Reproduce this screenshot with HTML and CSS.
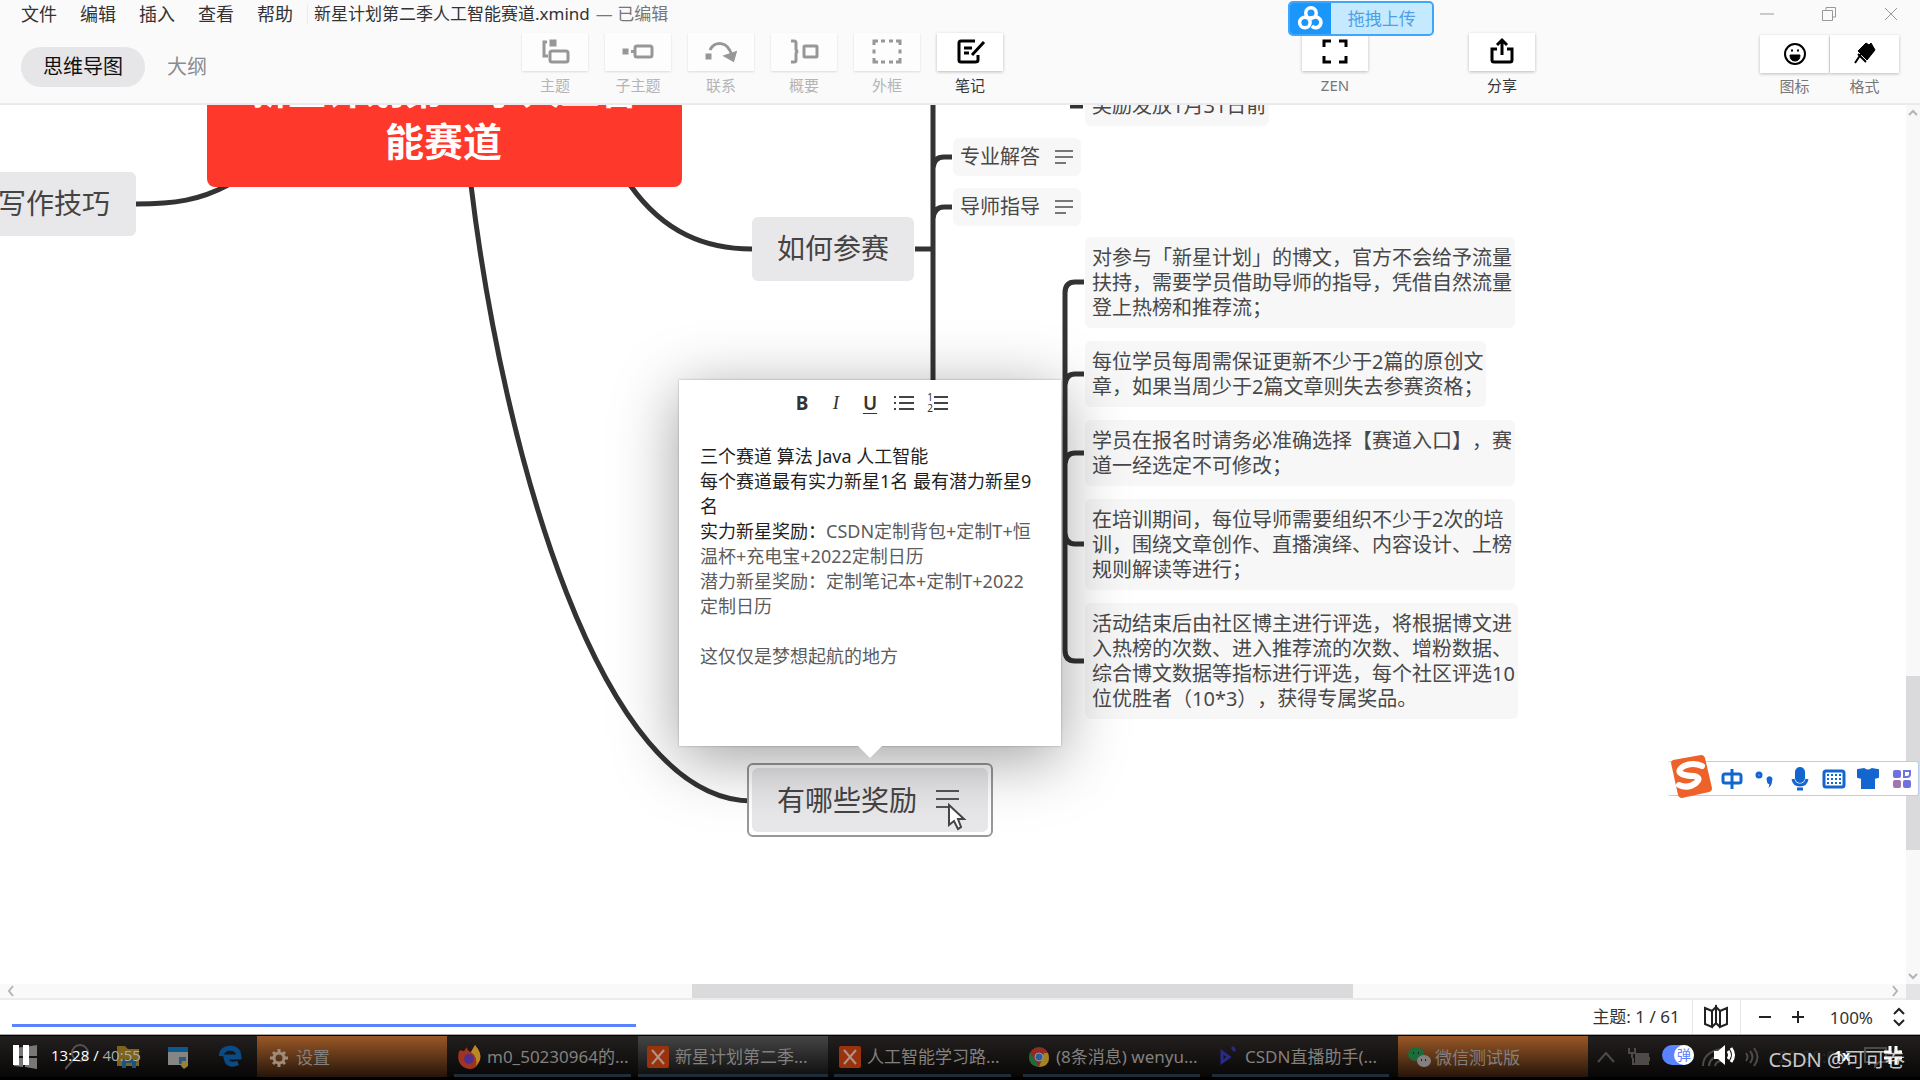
FILE: index.html
```html
<!DOCTYPE html>
<html lang="zh-CN">
<head>
<meta charset="utf-8">
<meta name="viewport" content="width=device-width, initial-scale=1">
<title>新星计划第二季人工智能赛道.xmind</title>
<link rel="stylesheet" href="styles.css">
</head>
<body>
<div class="app">
  <header class="header">
    <div class="menubar">
      <nav class="menus">
        <button class="menu">文件</button>
        <button class="menu">编辑</button>
        <button class="menu">插入</button>
        <button class="menu">查看</button>
        <button class="menu">帮助</button>
      </nav>
      <div class="doc-title">新星计划第二季人工智能赛道.xmind<span class="doc-state">— 已编辑</span></div>
      <div class="window-controls">
        <button class="win-btn" aria-label="最小化"><svg width="16" height="16" viewBox="0 0 16 16"><path d="M1 8h14"/></svg></button>
        <button class="win-btn" aria-label="还原"><svg width="16" height="16" viewBox="0 0 16 16"><path d="M1.500 4.500h10v10h-10zM5 4V1.500h9.500V11H12"/></svg></button>
        <button class="win-btn" aria-label="关闭"><svg width="16" height="16" viewBox="0 0 16 16"><path d="M2 2l12 12M14 2L2 14"/></svg></button>
      </div>
    </div>
    <div class="toolbar">
      <div class="views">
        <button class="view view-active">思维导图</button>
        <button class="view">大纲</button>
      </div>
      <div class="tools">
        <button class="tool" disabled><span class="tool-box"><svg width="32" height="32" viewBox="0 0 32 32"><path d="M8 6H5v14h4"/><rect x="11" y="15" width="18" height="11" rx="2"/><rect class="solid" x="12" y="5" width="4" height="4"/></svg></span>主题</button>
        <button class="tool" disabled><span class="tool-box"><svg width="32" height="32" viewBox="0 0 32 32"><rect class="solid" x="2" y="14" width="3" height="3"/><path d="M9 15.500h4"/><rect x="13" y="10" width="17" height="11" rx="2"/></svg></span>子主题</button>
        <button class="tool" disabled><span class="tool-box"><svg width="32" height="32" viewBox="0 0 32 32"><rect class="solid" x="2" y="19" width="3" height="3"/><path d="M5 14c4-9 18-10 22 6"/><path class="solid" d="M30 17l-2 7-7-4z"/></svg></span>联系</button>
        <button class="tool" disabled><span class="tool-box"><svg width="32" height="32" viewBox="0 0 32 32"><path d="M3 5h3q2 0 2 2v6q0 2 2 2.500q-2 .5-2 2.500v6q0 2-2 2H3"/><rect x="16" y="10" width="13" height="11" rx="1"/></svg></span>概要</button>
        <button class="tool" disabled><span class="tool-box"><svg width="32" height="32" viewBox="0 0 32 32"><path d="M3 9V5h4M25 5h4v4M29 22v4h-4M7 26H3v-4M10 5h4M18 5h4M10 26h4M18 26h4M3 13.500v4M29 13.500v4"/></svg></span>外框</button>
        <button class="tool tool-on"><span class="tool-box"><svg width="32" height="32" viewBox="0 0 32 32"><path d="M21 5H7q-2 0-2 2v17q0 2 2 2h14q3 0 3-2v-5M10 12h8M10 17h5M30 6L18 19"/></svg></span>笔记</button>
      </div>
      <div class="tools tools-share">
        <button class="tool tool-on"><span class="tool-box"><svg width="32" height="32" viewBox="0 0 32 32"><path d="M5 11V5h7M20 5h7v6M27 20v6h-7M12 26H5v-6"/></svg></span><span class="dim">ZEN</span></button>
        <button class="tool tool-on"><span class="tool-box"><svg width="32" height="32" viewBox="0 0 32 32"><path d="M11 13H6v11q0 2 2 2h16q2 0 2-2V13h-5M16 19V5M11 9l5-5 5 5"/></svg></span>分享</button>
      </div>
      <div class="tools tools-side">
        <button class="tool tool-on"><span class="tool-box"><svg width="32" height="32" viewBox="0 0 32 32"><circle cx="16" cy="16" r="10"/><path class="solid" d="M11 17h10q0 6-5 6t-5-6z"/><path d="M12 12.500h2M18 12.500h2"/></svg></span><span class="dim">图标</span></button>
        <button class="tool tool-on"><span class="tool-box"><svg width="32" height="32" viewBox="0 0 32 32"><path class="solid" d="M17 5l3 2 2-2 4 7-8 10-9-9z"/><path d="M12 16l-6 9M9 16l8 8"/></svg></span><span class="dim">格式</span></button>
      </div>
    </div>
    <button class="upload"><span class="upload-logo"><svg width="28" height="28" viewBox="0 0 32 32"><circle cx="16" cy="9" r="6"/><circle cx="9" cy="20" r="6"/><path d="M14 17q2-3 6-3a6 6 0 1 1-3 10"/></svg></span><span class="upload-text">拖拽上传</span></button>
  </header>

  <main class="workspace">
    <div class="canvas">
      <svg class="links" width="1906" height="880" viewBox="0 104 1906 880">
        <path d="M136 203C175 203 200 199 228 184"/>
        <path d="M471 184C503 450 600 800 752 800"/>
        <path d="M630 184C664 232 706 248 752 248"/>
        <path d="M915 248H933M933 104V420M933 167Q934 156 944 156H952M933 218Q934 206 944 206H952"/>
        <path d="M1070 105H1083"/>
        <path d="M1084 281H1075Q1065 281 1065 292V649Q1065 660 1075 660H1084M1065 384Q1066 373 1075 373H1084M1065 463Q1066 452 1075 452H1084M1065 532Q1066 543 1075 543H1084"/>
      </svg>

      <div class="node node-root">新星计划第二季人工智<br>能赛道</div>
      <div class="node node-main node-writing">写作技巧</div>
      <div class="node node-main node-join">如何参赛</div>
      <div class="node node-leaf node-award">奖励发放1月31日前</div>
      <div class="leaves leaves-help">
        <div class="node-leaf node-note">专业解答 <svg width="20" height="20" viewBox="0 0 20 20"><path d="M1 4h18M1 10h18M1 16h11"/></svg></div>
        <div class="node-leaf node-note">导师指导 <svg width="20" height="20" viewBox="0 0 20 20"><path d="M1 4h18M1 10h18M1 16h11"/></svg></div>
      </div>
      <div class="leaves leaves-rules">
        <div class="node-leaf">对参与「新星计划」的博文，官方不会给予流量<br>扶持，需要学员借助导师的指导，凭借自然流量<br>登上热榜和推荐流；</div>
        <div class="node-leaf">每位学员每周需保证更新不少于2篇的原创文<br>章，如果当周少于2篇文章则失去参赛资格；</div>
        <div class="node-leaf">学员在报名时请务必准确选择【赛道入口】，赛<br>道一经选定不可修改；</div>
        <div class="node-leaf">在培训期间，每位导师需要组织不少于2次的培<br>训，围绕文章创作、直播演绎、内容设计、上榜<br>规则解读等进行；</div>
        <div class="node-leaf">活动结束后由社区博主进行评选，将根据博文进<br>入热榜的次数、进入推荐流的次数、增粉数据、<br>综合博文数据等指标进行评选，每个社区评选10<br>位优胜者（10*3），获得专属奖品。</div>
      </div>
      <div class="node node-selected"><div class="node-main node-prize">有哪些奖励 <svg width="26" height="26" viewBox="0 0 26 26"><path d="M1 4h23M1 12h23M1 20h14"/></svg></div></div>

      <section class="note">
        <div class="note-tools">
          <button class="fmt" aria-label="粗体"><b>B</b></button>
          <button class="fmt fmt-italic" aria-label="斜体"><i>I</i></button>
          <button class="fmt" aria-label="下划线"><u>U</u></button>
          <button class="fmt" aria-label="项目列表"><svg width="22" height="20" viewBox="0 0 22 20"><path d="M6 4h15M6 10h15M6 16h15M1 4h2M1 10h2M1 16h2"/></svg></button>
          <button class="fmt" aria-label="编号列表"><span class="digits"><span>1</span><span>2</span></span><svg width="16" height="20" viewBox="0 0 16 20"><path d="M1 4h14M1 10h14M1 16h14"/></svg></button>
        </div>
        <div class="note-text" contenteditable="true" spellcheck="false" role="textbox" aria-label="笔记">三个赛道 算法 Java 人工智能<br>每个赛道最有实力新星1名 最有潜力新星9<br>名<br>实力新星奖励：<span class="soft">CSDN定制背包+定制T+恒<br>温杯+充电宝+2022定制日历<br>潜力新星奖励：定制笔记本+定制T+2022<br>定制日历<br><br>这仅仅是梦想起航的地方</span></div>
      </section>

      <svg class="cursor" width="20" height="28" viewBox="0 0 20 28"><path d="M2 2v20l5-4 4 8 3-2-3-8h6z"/></svg>
    </div>
    <div class="vbar">
      <svg width="10" height="8" viewBox="0 0 10 8"><path d="M1 6l4-4 4 4"/></svg>
      <div class="vthumb"></div>
      <svg width="10" height="8" viewBox="0 0 10 8"><path d="M1 2l4 4 4-4"/></svg>
    </div>
    <div class="hbar">
      <svg width="8" height="12" viewBox="0 0 8 12"><path d="M6 1L2 6l4 5"/></svg>
      <div class="hthumb"></div>
      <svg width="8" height="12" viewBox="0 0 8 12"><path d="M2 1l4 5-4 5"/></svg>
    </div>
    <div class="corner"></div>

    <div class="ime">
      <svg class="ime-logo" width="46" height="46" viewBox="0 0 46 46"><path class="ime-red" d="M3 9q0-2 2-3L33 1q3 0 4 3l7 30q0 3-3 4l-27 6q-3 0-4-3z"/><path class="ime-s" d="M34 12q-9-4-18 0-8 5-2 8 4 2 12 2 8 2 2 7-8 6-17 2"/></svg>
      <button class="ime-btn" aria-label="中文"><svg width="24" height="24" viewBox="0 0 24 24"><rect x="3" y="7" width="18" height="9" rx="2"/><path d="M12 2v20"/></svg></button>
      <button class="ime-btn" aria-label="标点"><svg width="24" height="24" viewBox="0 0 24 24"><circle cx="5" cy="8" r="2"/><path class="comma" d="M13 14a3 3 0 1 1 5 0q0 5-4 7 2-3 1-4-2 0-2-3z"/></svg></button>
      <button class="ime-btn" aria-label="语音"><svg width="24" height="24" viewBox="0 0 24 24"><rect class="fill" x="8" y="1" width="8" height="14" rx="4"/><path d="M5 12q1 6 7 6t7-6M9 22h6"/></svg></button>
      <button class="ime-btn" aria-label="键盘"><svg width="24" height="24" viewBox="0 0 24 24"><rect x="2" y="4" width="20" height="16" rx="2"/><path class="keys" d="M5 8h14M5 12h14M5 16h2M9 16h6M17 16h2"/></svg></button>
      <button class="ime-btn" aria-label="皮肤"><svg width="24" height="24" viewBox="0 0 24 24"><path class="fill" d="M2 3l6-1q4 3 8 0l6 1v7l-4 1v10H6V11L2 10z"/></svg></button>
      <button class="ime-btn ime-more" aria-label="工具箱"><svg width="24" height="24" viewBox="0 0 24 24"><rect class="q1" x="3" y="3" width="8" height="8" rx="2"/><path class="q2" d="M14 10V4h6v3q0 3-3 3z"/><rect class="q3" x="3" y="13" width="8" height="8" rx="2"/><rect class="q1" x="13" y="13" width="8" height="8" rx="2"/></svg></button>
    </div>
  </main>

  <footer class="status">
    <span class="status-count">主题: 1 / 61</span>
    <button class="status-map" aria-label="导航图"><svg width="26" height="26" viewBox="0 0 26 26"><path d="M2 4l7 3v16l-7-3zM9 7l4-4v16l-4 4M17 7l-4-4v16l4 4M24 4l-7 3v16l7-3z"/></svg></button>
    <div class="zoom">
      <button class="zoom-btn" aria-label="缩小"><svg width="14" height="14" viewBox="0 0 14 14"><path d="M1 7h12"/></svg></button>
      <button class="zoom-btn" aria-label="放大"><svg width="14" height="14" viewBox="0 0 14 14"><path d="M1 7h12M7 1v12"/></svg></button>
      <span class="zoom-value">100%</span>
      <button class="zoom-btn" aria-label="缩放比例"><svg width="14" height="20" viewBox="0 0 14 20"><path d="M2 7l5-5 5 5M2 13l5 5 5-5"/></svg></button>
    </div>
    <div class="progress"></div>
  </footer>

  <div class="taskbar">
    <div class="pinned">
      <svg width="24" height="26" viewBox="0 0 24 26"><path fill="#777" d="M0 4l9-1v9H0zM11 3l12-2v11H11zM0 14h9v9l-9-1zM11 14h12v11l-12-2z"/></svg>
      <svg width="24" height="26" viewBox="0 0 24 26"><g fill="none" stroke="#575352" stroke-width="2"><circle cx="15" cy="9" r="8"/><path d="M9 15L0 25"/></g></svg>
      <svg width="24" height="26" viewBox="0 0 24 26"><path fill="#7d631c" d="M1 2h8l3 3h11v17H1z"/><path fill="#1c5480" d="M6 24v-9h14v9h-4v-5h-6v5z"/></svg>
      <svg width="24" height="26" viewBox="0 0 24 26"><path fill="#858585" d="M1 3h20v18H1z"/><path fill="#0d5a92" d="M1 3h20v5H1z"/><path fill="#30597a" d="M12 13h7v7h-7z"/><path fill="#94823a" d="M15 17h6v5l-4 3-3-3z"/></svg>
      <svg width="24" height="26" viewBox="0 0 24 26"><path fill="none" stroke="#0a4b85" stroke-width="5" d="M3 12q1-8 10-8 8 1 8 9H8q1 10 12 6"/></svg>
    </div>
    <button class="task task-alert"><svg width="20" height="22" viewBox="0 0 20 22"><g fill="none" stroke="#a08c7a" stroke-width="3"><circle cx="10" cy="11" r="5"/><path d="M10 2v3M10 17v3M1 11h3M16 11h3M4 5l2 2M14 15l2 2M16 5l-2 2M6 15l-2 2"/></g></svg><span>设置</span></button>
    <button class="task"><svg width="24" height="26" viewBox="0 0 24 26"><path fill="#a03420" d="M2 6q2 1 4 1l3-4q0 4 4 5l4-7q7 8 5 15-3 9-10 9T1 18Q-1 10 2 6z"/><path fill="#b78a25" d="M13 8l4-7q7 8 5 15l-4 6q2-9-5-14z"/><circle fill="#50308c" cx="11" cy="15" r="5"/></svg><span>m0_50230964的...</span></button>
    <button class="task task-current"><svg width="24" height="26" viewBox="0 0 24 26"><rect fill="#9a330d" x="1" y="2" width="22" height="22" rx="2"/><path stroke="#b09488" stroke-width="2" d="M6 6l12 14M18 6L6 20"/></svg><span>新星计划第二季...</span></button>
    <button class="task"><svg width="24" height="26" viewBox="0 0 24 26"><rect fill="#9a330d" x="1" y="2" width="22" height="22" rx="2"/><path stroke="#b09488" stroke-width="2" d="M6 6l12 14M18 6L6 20"/></svg><span>人工智能学习路...</span></button>
    <button class="task"><svg width="24" height="26" viewBox="0 0 24 26"><circle fill="#8f2d22" cx="12" cy="13" r="10"/><path fill="#1f6b36" d="M3 8l9 15Q2 22 2 13z"/><path fill="#a38420" d="M12 23l5-14h4q4 13-9 14z"/><circle fill="#2c5c9c" cx="12" cy="13" r="4" stroke="#999" stroke-width="1"/></svg><span>(8条消息) wenyu...</span></button>
    <button class="task"><svg width="24" height="26" viewBox="0 0 24 26"><path fill="none" stroke="#2a2a86" stroke-width="3" d="M6 8v10l7-5zM16 3l3 4"/></svg><span>CSDN直播助手(...</span></button>
    <button class="task task-alert task-wechat"><svg width="24" height="26" viewBox="0 0 24 26"><ellipse fill="#1d6b38" cx="9" cy="9" rx="8" ry="7"/><ellipse fill="#858080" cx="17" cy="16" rx="7" ry="6"/><path stroke="#222" stroke-width="2" d="M6 8h1M11 8h1M14 15h1M18 15h1"/></svg><span>微信测试版</span></button>
    <div class="tray">
      <svg width="18" height="12" viewBox="0 0 18 12"><path d="M1 11l8-9 8 9"/></svg>
      <svg width="24" height="20" viewBox="0 0 24 20"><path d="M8 7h13v10H6v-6M2 1v5h6V1M5 6v5M22 10v4"/><path class="cell" d="M9 9h10v6H9z"/></svg>
      <svg class="tray-net" width="24" height="22" viewBox="0 0 24 22"><path d="M2 20Q2 6 21 3M8 20q0-9 13-11M14 20q1-5 7-5"/></svg>
      <svg width="24" height="20" viewBox="0 0 24 20"><path d="M9 6q3 4 0 8M13 4q5 6 0 12M17 1q7 9 0 18"/></svg>
      <span class="clock">20:20:01</span>
      <svg class="tray-msg" width="24" height="22" viewBox="0 0 24 22"><path d="M1 2h21v14h-7l-4 4v-4H1z"/></svg>
    </div>

    <div class="player">
      <button class="pause" aria-label="暂停"><svg width="18" height="20" viewBox="0 0 18 20"><path d="M1 0h6v20H1zM11 0h6v20h-6z"/></svg></button>
      <div class="time">13:28 / <span class="total">40:55</span></div>
      <button class="danmu" aria-label="弹幕"><span class="danmu-dot">弹</span></button>
      <button class="volume" aria-label="音量"><svg width="24" height="22" viewBox="0 0 24 22"><path class="horn" d="M1 7h4l7-6v20l-7-6H1z"/><path d="M15 7q3 4 0 8M18 4q5 7 0 14"/></svg></button>
      <button class="speed">1x</button>
      <button class="shrink" aria-label="退出全屏"><svg width="20" height="20" viewBox="0 0 20 20"><path d="M7 1v6H1M13 1v6h6M7 19v-6H1M13 19v-6h6"/></svg></button>
    </div>
    <div class="watermark">CSDN @可可卷</div>
  </div>
</div>
</body>
</html>
```
FILE: styles.css
```css
* { box-sizing: border-box; }

body {
  margin: 0;
  background: #fff;
  color: #333;
  font-family: "Noto Sans", "Noto Sans CJK SC", sans-serif;
  text-spacing-trim: space-all;
  overflow: hidden;
}

button {
  margin: 0;
  padding: 0;
  border: 0;
  background: none;
  color: inherit;
  font: inherit;
}

svg { display: block; flex: none; }

.app { display: flex; flex-direction: column; min-height: 100vh; }

/* Header */
.header {
  position: relative;
  background: #fafafb;
  border-bottom: 2px solid #ebe9ec;
}
.menubar { display: flex; align-items: center; height: 28px; padding: 0 21px; }
.menus {
  display: flex;
  gap: 23px;
  padding-right: 14px;
  margin-right: 6px;
  border-right: 1px solid #ececee;
  font-size: 18px;
  line-height: 20px;
}
.doc-title { flex: 1; font-size: 17px; line-height: 20px; white-space: nowrap; }
.doc-state { margin-left: 6px; color: #777; }
.window-controls { display: flex; gap: 46px; }
.win-btn svg { fill: none; stroke: #999; stroke-width: 1; }

.toolbar { display: flex; align-items: flex-start; height: 75px; padding: 5px 21px 0; }
.views { display: flex; align-items: center; width: 501px; padding-top: 14px; font-size: 20px; line-height: 24px; }
.view { color: #8b8b8f; padding: 0 22px; }
.view-active { height: 40px; border-radius: 20px; background: #e6e5e8; color: #111; }
.tools { display: flex; gap: 17px; }
.tool {
  display: flex;
  flex-direction: column;
  align-items: center;
  gap: 4px;
  width: 66px;
  color: #b4b4b6;
  font-size: 15px;
  line-height: 20px;
}
.tool-box {
  display: flex;
  justify-content: center;
  width: 100%;
  height: 38px;
  padding-top: 3px;
  background: #fdfdfd;
  box-shadow: 0 1px 2px rgba(0, 0, 0, .12);
}
.tool svg { fill: none; stroke: #979799; stroke-width: 3; }
.tool svg .solid { fill: #979799; }
.tool-on { color: #333; }
.tool-on .tool-box { background: #fff; box-shadow: 0 1px 3px rgba(0, 0, 0, .25); }
.tool-on svg { stroke: #000; stroke-width: 3; }
.tool-on svg .solid { fill: #000; stroke-width: 1; }
.dim { color: #777; }
.tools-share { gap: 101px; margin-left: auto; margin-right: auto; padding-left: 74px; }
.tools-side { gap: 1px; padding-top: 2px; }
.tools-side .tool { width: 69px; gap: 3px; }
.tools-side svg { stroke-width: 2; }

.upload {
  position: absolute;
  top: 1px;
  left: 67.1%;
  display: flex;
  width: 146px;
  height: 35px;
  border: 2px solid #3ea6fb;
  border-radius: 5px;
  background: #c5e9fe;
  overflow: hidden;
}
.upload-logo { display: flex; align-items: center; justify-content: center; width: 41px; height: 31px; background: #1b96fb; }
.upload-logo svg { fill: none; stroke: #fff; stroke-width: 4; }
.upload-text { flex: 1; color: #4d9fe8; font-size: 17px; line-height: 32px; }

/* Mind map */
.workspace {
  position: relative;
  flex: 1;
  display: grid;
  grid-template-columns: minmax(0, 1fr) 14px;
  grid-template-rows: minmax(0, 1fr) 16px;
}
.canvas { position: relative; overflow: hidden; background: #fff; }
.links { position: absolute; left: 0; top: 0; fill: none; stroke: #333; stroke-width: 5; }
.node { position: absolute; white-space: nowrap; }
.node-root {
  left: 207px;
  top: -60px;
  width: 475px;
  padding: 18px 2px 20px 0;
  border-radius: 8px;
  background: #ff382c;
  color: #fff;
  font-size: 39px;
  font-weight: 700;
  line-height: 52px;
  text-align: center;
}
.node-main {
  height: 64px;
  padding: 0 26px;
  border-radius: 6px;
  background: #e8e7e9;
  color: #444;
  font-size: 28px;
  line-height: 62px;
  white-space: nowrap;
}
.node-writing { left: -28px; top: 67px; }
.node-join { left: 752px; top: 112px; padding: 0 25px; }
.leaves { position: absolute; display: flex; flex-direction: column; align-items: flex-start; gap: 13px; }
.leaves-help { left: 953px; top: 33px; }
.leaves-rules { left: 1085px; top: 132px; }
.node-leaf {
  padding: 8px 3px 8px 7px;
  border-radius: 6px;
  background: #f7f7f7;
  color: #484848;
  font-size: 20px;
  line-height: 25px;
  white-space: nowrap;
}
.node-award { left: 1085px; top: -20px; }
.node-note { display: flex; align-items: center; gap: 14px; padding: 7px; line-height: 24px; }
.node-note svg { fill: none; stroke: #777; stroke-width: 2; }
.leaves-help { gap: 12px; }
.node-selected {
  left: 747px;
  top: 658px;
  padding: 3px;
  border: 2px solid #98989b;
  border-radius: 6px;
  background: #fff;
}
.node-prize { display: flex; align-items: center; gap: 18px; padding: 0 27px 0 25px; }
.node-prize svg { fill: none; stroke: #555; stroke-width: 2; }

/* Note popover */
.note {
  position: absolute;
  left: 679px;
  top: 275px;
  width: 382px;
  height: 366px;
  background: #fff;
  box-shadow: 0 0 2px rgba(0, 0, 0, .3), 0 12px 60px rgba(0, 0, 0, .38);
}
.note::after {
  content: "";
  position: absolute;
  left: 179px;
  top: 366px;
  border: 12px solid transparent;
  border-top-color: #fff;
  border-bottom: 0;
}
.note-tools { display: flex; justify-content: center; gap: 10px; padding-top: 11px; }
.fmt { display: flex; align-items: center; justify-content: center; width: 24px; height: 24px; font-size: 19px; line-height: 24px; }
.fmt-italic { font-family: "Liberation Serif", serif; }
.fmt svg { fill: none; stroke: #444; stroke-width: 2; }
.fmt u { text-underline-offset: 3px; font-weight: 600; }
.digits { display: flex; flex-direction: column; font-size: 10px; line-height: 11px; }
.note-text { padding: 29px 21px; color: #1f1f1f; font-size: 18px; line-height: 25px; white-space: nowrap; outline: none; }
.soft { color: #5c5c5c; }
.cursor { position: absolute; left: 947px; top: 698px; fill: #fff; stroke: #444; stroke-width: 2; }

/* Scrollbars */
.vbar {
  position: relative;
  display: flex;
  flex-direction: column;
  align-items: center;
  justify-content: space-between;
  padding: 4px 0;
  background: #f8f8f9;
}
.hbar {
  position: relative;
  display: flex;
  align-items: center;
  justify-content: space-between;
  padding: 0 7px;
  background: #f9f9fa;
  border-bottom: 2px solid #ececee;
}
.vbar svg, .hbar svg { fill: none; stroke: #b4b4b6; stroke-width: 2; }
.vthumb { position: absolute; left: 0; right: 0; top: 65%; height: 19.7%; background: #dad9db; }
.hthumb { position: absolute; top: 0; bottom: 0; left: 36.3%; width: 34.7%; background: #dad9db; }
.corner { background: #e4e3e5; }

/* Input method bar */
.ime {
  position: absolute;
  right: 1px;
  top: 656px;
  display: flex;
  align-items: center;
  gap: 10px;
  height: 35px;
  padding: 0 4px 0 52px;
  border: 1px solid #bccde8;
  border-left: 0;
  border-radius: 3px;
  background: #fff;
}
.ime-logo { position: absolute; left: 0; top: -8px; }
.ime-red { fill: #ee6128; }
.ime-s { fill: none; stroke: #fff; stroke-width: 6; stroke-linecap: round; }
.ime-btn svg { fill: none; stroke: #1365cf; stroke-width: 3; }
.ime-btn .fill { fill: #1365cf; stroke-width: 2; }
.ime-btn .comma { fill: #1365cf; stroke: none; }
.ime-btn .keys { stroke-width: 2; stroke-dasharray: 2 2; }
.ime-more svg { stroke: none; }
.ime-more .q1 { fill: #7271e2; }
.ime-more .q2 { fill: #fff; stroke: #7271e2; stroke-width: 2; }
.ime-more .q3 { fill: #a375b0; }

/* Status bar */
.status {
  position: relative;
  display: flex;
  align-items: stretch;
  justify-content: flex-end;
  height: 35px;
  border-bottom: 1px solid #aaa;
  font-size: 17px;
  line-height: 33px;
}
.status-count { padding-right: 12px; }
.status-map { display: flex; align-items: center; justify-content: center; width: 49px; border: solid #e6e6e8; border-width: 0 1px; }
.status svg { fill: none; stroke: #222; stroke-width: 2; }
.zoom { display: flex; align-items: center; gap: 19px; padding: 0 14px 0 17px; }
.zoom-value { margin-left: 6px; }
.progress { position: absolute; left: 12px; top: 24px; width: 32.5%; height: 3px; background: #5b83ff; }

/* Taskbar */
.taskbar {
  position: relative;
  display: flex;
  height: 45px;
  border: solid #000;
  border-width: 1px 0 3px;
  background: linear-gradient(#231f1f, #080706);
  overflow: hidden;
}
.pinned { display: flex; align-items: center; gap: 27px; width: 257px; padding-left: 14px; }
.task {
  display: flex;
  align-items: center;
  gap: 5px;
  width: 177px;
  margin-right: 12px;
  padding-top: 3px;
  padding-left: 4px;
  border-bottom: 3px solid #1e2d3a;
  color: #83807e;
  font-size: 17px;
  line-height: 24px;
  white-space: nowrap;
}
.task-alert {
  width: 190px;
  margin-right: 7px;
  padding-left: 12px;
  gap: 7px;
  border: 0;
  background: linear-gradient(#9a5826, #25150a);
}
.task-current { width: 190px; margin: 0 6px 0 -5px; padding-left: 8px; background: linear-gradient(#454545, #111); }
.task-wechat { margin-left: -3px; padding-left: 9px; gap: 4px; }
.tray { display: flex; align-items: center; gap: 12px; margin-left: auto; padding-right: 32px; }
.tray svg { fill: none; stroke: #4e4a49; stroke-width: 2; }
.tray .cell { fill: #4e4a49; }
.tray-net { margin-left: 38px; }
.clock { margin: 0 6px; color: #2c2928; font-size: 17px; }

/* Video player controls, laid over the taskbar */
.player { position: absolute; inset: 0; display: flex; align-items: center; padding: 0 17px 3px 12px; color: #fff; }
.player svg { fill: #fff; }
.time { margin-left: 21px; font-size: 15px; line-height: 20px; font-family: "Open Sans", sans-serif; }
.total { color: #aaa; }
.danmu { display: flex; justify-content: flex-end; width: 32px; height: 20px; margin-left: auto; border-radius: 10px; background: #5b83ff; }
.danmu-dot { width: 20px; height: 20px; border-radius: 50%; background: #fff; color: #5b83ff; font-size: 14px; line-height: 19px; text-align: center; }
.volume { margin: 0 96px 0 19px; }
.volume svg, .shrink svg { fill: none; stroke: #fff; stroke-width: 3; }
.volume .horn { fill: #fff; stroke: none; }
.speed { width: 18px; margin-right: 32px; font-size: 14px; font-weight: 700; }
.watermark { position: absolute; right: 15px; top: 10px; color: rgba(235, 235, 235, .85); font-size: 20px; line-height: 28px; }
```
